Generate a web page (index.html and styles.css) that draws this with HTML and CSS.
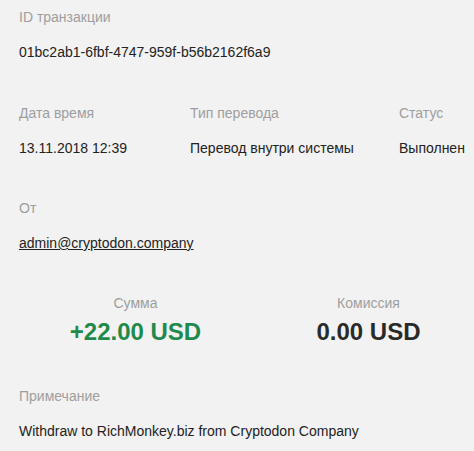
FILE: index.html
```html
<!DOCTYPE html>
<html>
<head>
<meta charset="utf-8">
<link rel="stylesheet" href="styles.css">
</head>
<body>
<div class="page">
  <section class="field first">
    <div class="label">ID транзакции</div>
    <div class="value">01bc2ab1-6fbf-4747-959f-b56b2162f6a9</div>
  </section>
  <section class="row3">
    <div class="field">
      <div class="label">Дата время</div>
      <div class="value">13.11.2018 12:39</div>
    </div>
    <div class="field">
      <div class="label">Тип перевода</div>
      <div class="value">Перевод внутри системы</div>
    </div>
    <div class="field">
      <div class="label">Статус</div>
      <div class="value">Выполнен</div>
    </div>
  </section>
  <section class="field">
    <div class="label">От</div>
    <div class="value"><a class="link" href="#">admin@cryptodon.company</a></div>
  </section>
  <section class="amounts">
    <div class="amount">
      <div class="label">Сумма</div>
      <div class="big green">+22.00 USD</div>
    </div>
    <div class="amount">
      <div class="label">Комиссия</div>
      <div class="big">0.00 USD</div>
    </div>
  </section>
  <section class="field note">
    <div class="label">Примечание</div>
    <div class="value">Withdraw to RichMonkey.biz from Cryptodon Company</div>
  </section>
</div>
</body>
</html>
```
FILE: styles.css
```css
html, body {
  margin: 0;
  padding: 0;
  background: #f2f2f2;
}
body {
  font-family: "Liberation Sans", Arial, sans-serif;
  font-size: 14px;
  color: #222;
  overflow: hidden;
}
.page {
  padding: 7px 0 0 19px;
  display: flex;
  flex-direction: column;
}
.label {
  color: #9e9e9e;
  line-height: 20px;
}
.value {
  line-height: 20px;
  margin-top: 15px;
  white-space: nowrap;
}
.row3 {
  display: grid;
  grid-template-columns: 171px 209px auto;
  margin-top: 41px;
}
.page > section.field:not(.first) {
  margin-top: 40px;
}
.link {
  color: #222;
  text-decoration: underline;
}
.amounts {
  display: grid;
  grid-template-columns: 233px 233px;
  margin-top: 40px;
  text-align: center;
}
.amount .label {
  line-height: 20px;
}
.big {
  font-size: 24px;
  font-weight: bold;
  line-height: 28px;
  margin-top: 5px;
  color: #2a2a2a;
}
.green {
  color: #1f8a4c;
}
.page > section.note {
  margin-top: 45px;
}
```
